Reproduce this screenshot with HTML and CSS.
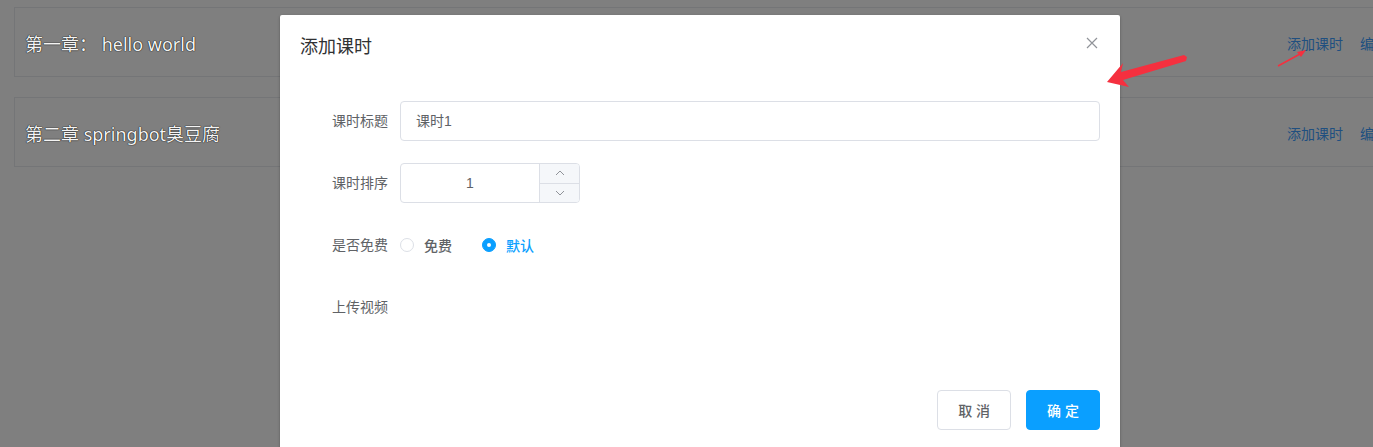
FILE: index.html
```html
<!DOCTYPE html>
<html lang="zh">
<head>
<meta charset="utf-8">
<title>添加课时</title>
<link rel="stylesheet" href="styles.css">
</head>
<body>
<div class="page">
  <div class="chapter">
    <span class="chapter-title">第一章： hello world</span>
    <span class="links"><a>添加课时</a><a>编辑</a></span>
  </div>
  <div class="chapter">
    <span class="chapter-title">第二章 springbot臭豆腐</span>
    <span class="links"><a>添加课时</a><a>编辑</a></span>
  </div>
</div>

<div class="dialog">
  <div class="dialog-header">
    <span class="dialog-title">添加课时</span>
    <span class="close">
      <svg width="12" height="12" viewBox="0 0 12 12"><path d="M1 1L11 11M11 1L1 11" stroke="#909399" stroke-width="1.2" fill="none"/></svg>
    </span>
  </div>
  <div class="dialog-body">
    <div class="form-item">
      <label class="form-label">课时标题</label>
      <div class="form-content">
        <div class="input">课时1</div>
      </div>
    </div>
    <div class="form-item">
      <label class="form-label">课时排序</label>
      <div class="form-content">
        <div class="input-number">
          <div class="num-value">1</div>
          <div class="num-controls">
            <span class="num-btn">
              <svg width="10" height="6" viewBox="0 0 10 6"><path d="M1 5L5 1L9 5" stroke="#909399" stroke-width="1" fill="none"/></svg>
            </span>
            <span class="num-btn">
              <svg width="10" height="6" viewBox="0 0 10 6"><path d="M1 1L5 5L9 1" stroke="#909399" stroke-width="1" fill="none"/></svg>
            </span>
          </div>
        </div>
      </div>
    </div>
    <div class="form-item">
      <label class="form-label">是否免费</label>
      <div class="form-content radios">
        <span class="radio"><span class="radio-dot"></span><span class="radio-label">免费</span></span>
        <span class="radio checked"><span class="radio-dot"></span><span class="radio-label">默认</span></span>
      </div>
    </div>
    <div class="form-item">
      <label class="form-label">上传视频</label>
      <div class="form-content"></div>
    </div>
  </div>
  <div class="dialog-footer">
    <button class="btn">取 消</button>
    <button class="btn primary">确 定</button>
  </div>
</div>

<svg class="annot" width="1373" height="447" viewBox="0 0 1373 447">
  <polygon points="1107,82 1123,63 1121,72 1184,55 1187,57 1186,61 1123,80 1129,87" fill="#f5303f"/>
  <path d="M1278,66 L1300,54" stroke="#f5303f" stroke-width="1.5" fill="none"/>
  <polygon points="1306,50 1297,52 1301,57" fill="#f5303f"/>
</svg>
</body>
</html>
```

FILE: styles.css
```css
* { box-sizing: border-box; }
html, body { margin: 0; padding: 0; }
body {
  width: 1373px;
  height: 447px;
  overflow: hidden;
  background: #7f7f7f;
  font-family: "Liberation Sans", "Noto Sans CJK SC", sans-serif;
  position: relative;
}
.page {
  padding: 7px 0 0 14px;
  display: flex;
  flex-direction: column;
  gap: 20px;
}
.chapter {
  width: 1380px;
  height: 70px;
  border: 1px solid #747577;
  display: flex;
  align-items: center;
  padding: 2px 0 0 10px;
}
.chapter-title {
  font-family: "Noto Sans", "Noto Sans CJK SC", sans-serif;
  font-size: 18px;
  color: #f4f4f4;
  text-shadow: 0 0 1px #000, 0 0 1px #000;
}
.links {
  margin-left: auto;
  display: flex;
  gap: 17px;
  font-size: 14px;
  color: #204f80;
  white-space: nowrap;
  margin-right: 5px;
}
.dialog {
  position: absolute;
  left: 280px;
  top: 15px;
  width: 840px;
  height: 432px;
  background: #fff;
  border-radius: 2px 2px 0 0;
  box-shadow: 0 1px 3px rgba(0,0,0,.3);
}
.dialog-header {
  padding: 20px 20px 10px;
  position: relative;
  line-height: 24px;
}
.dialog-title {
  font-size: 18px;
  color: #303133;
}
.close {
  position: absolute;
  top: 22px;
  right: 22px;
  width: 12px;
  height: 12px;
  display: flex;
}
.dialog-body {
  padding: 31px 20px 30px;
  font-size: 14px;
  color: #606266;
}
.form-item {
  display: flex;
  margin-bottom: 22px;
  min-height: 40px;
}
.form-label {
  width: 100px;
  padding-right: 12px;
  text-align: right;
  line-height: 40px;
  color: #606266;
  font-size: 14px;
}
.form-content {
  flex: 1;
  display: flex;
  align-items: center;
}
.input {
  width: 100%;
  height: 40px;
  border: 1px solid #dcdfe6;
  border-radius: 4px;
  padding: 0 15px;
  line-height: 38px;
  color: #606266;
}
.input-number {
  width: 180px;
  height: 40px;
  border: 1px solid #dcdfe6;
  border-radius: 4px;
  display: flex;
  overflow: hidden;
}
.num-value {
  flex: 1;
  text-align: center;
  line-height: 38px;
  color: #606266;
}
.num-controls {
  width: 40px;
  border-left: 1px solid #dcdfe6;
  background: #f5f7fa;
  display: flex;
  flex-direction: column;
}
.num-btn {
  flex: 1;
  display: flex;
  align-items: center;
  justify-content: center;
}
.num-btn + .num-btn { border-top: 1px solid #dcdfe6; }
.radios { gap: 30px; }
.radio {
  display: flex;
  align-items: center;
  gap: 10px;
}
.radio-dot {
  width: 14px;
  height: 14px;
  border: 1px solid #dcdfe6;
  border-radius: 50%;
  display: flex;
  align-items: center;
  justify-content: center;
}
.radio-label { color: #606266; font-weight: 500; }
.radio.checked .radio-dot {
  background: #0a9fff;
  border-color: #0a9fff;
}
.radio.checked .radio-dot::after {
  content: "";
  width: 4px;
  height: 4px;
  border-radius: 50%;
  background: #fff;
}
.radio.checked .radio-label { color: #0a9fff; }
.dialog-footer {
  padding: 11px 20px 20px;
  display: flex;
  justify-content: flex-end;
  gap: 15px;
}
.btn {
  height: 40px;
  padding: 0 20px;
  border: 1px solid #dcdfe6;
  border-radius: 4px;
  background: #fff;
  color: #606266;
  font-size: 14px;
  font-family: "Liberation Sans", "Noto Sans CJK SC", sans-serif;
  font-weight: 500;
}
.btn.primary {
  background: #0a9fff;
  border-color: #0a9fff;
  color: #fff;
}
.annot {
  position: absolute;
  left: 0;
  top: 0;
  pointer-events: none;
}
```
